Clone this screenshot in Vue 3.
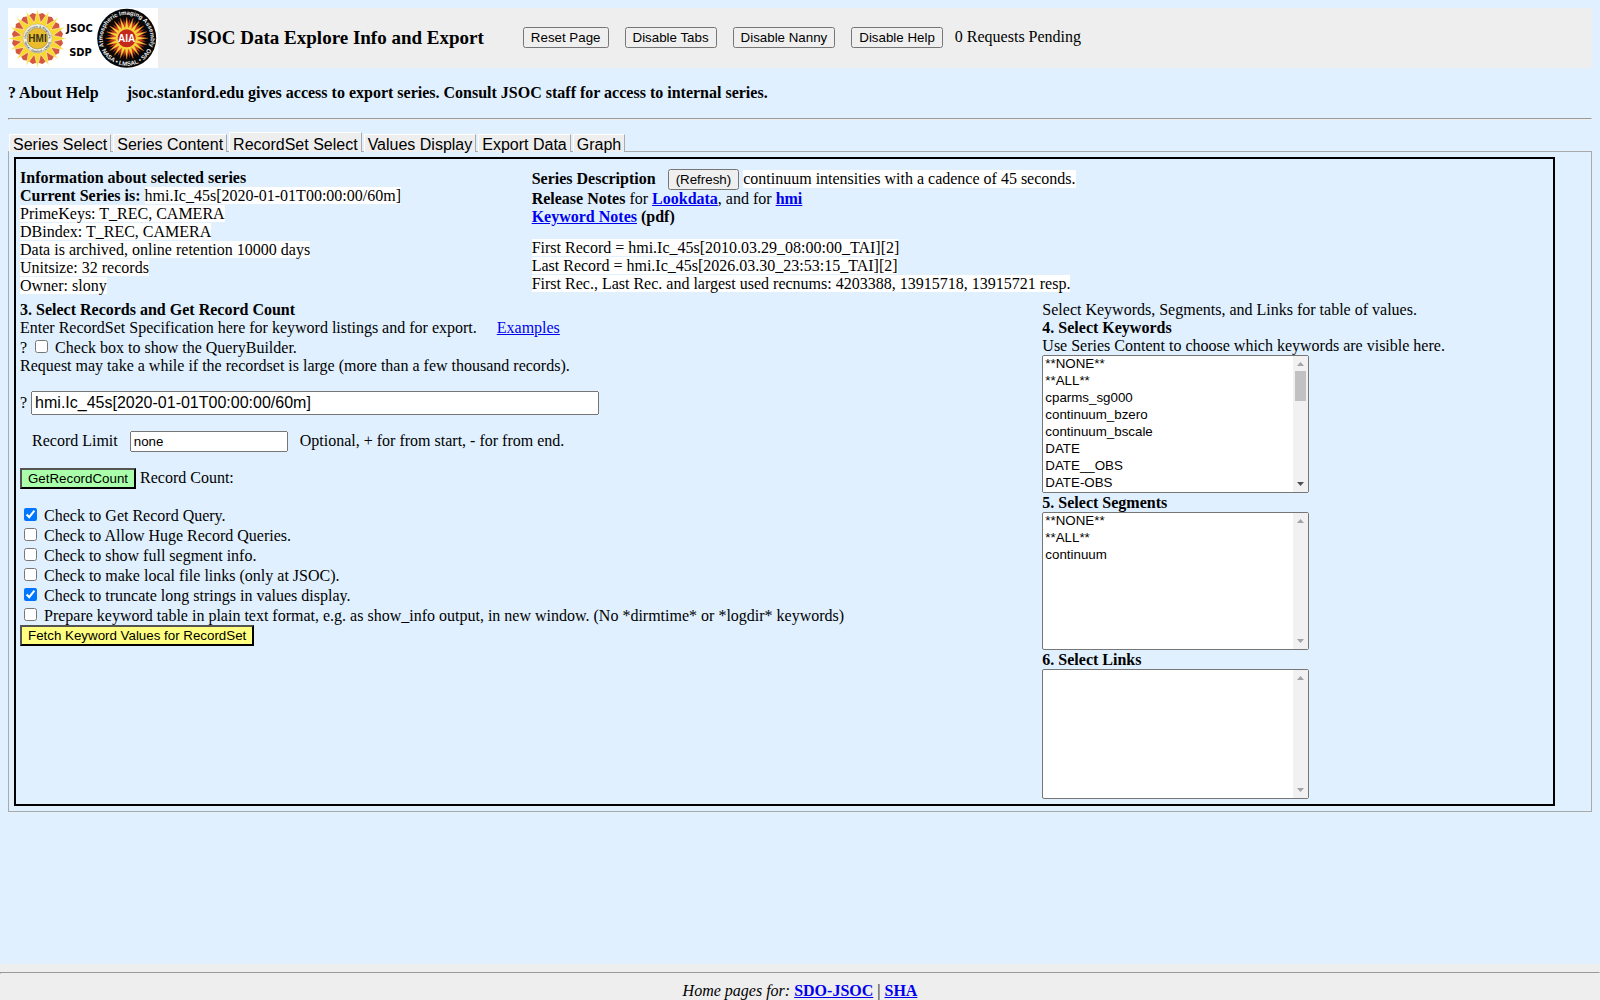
<template>
    <div class="page">
        <header class="header">
            <svg class="logo" viewBox="0 0 150 60" role="img" aria-label="JSOC SDP">
                <defs>
                    <path id="aia-top" d="M96 38.500 A24 24 0 1 1 141.400 38.500" />
                    <path id="aia-bottom" d="M93 40 A27.500 27.500 0 0 0 144.400 40" />
                    <path id="hmi-top" d="M18 31 A11.500 11.500 0 1 1 41 31" />
                    <path id="hmi-bottom" d="M16 31 A13.500 13.500 0 0 0 43 31" />
                </defs>
                <rect width="150" height="60" fill="#fff" />

                <!-- HMI sun -->
                <polygon :points="star(29.5, 30.5, 16, 26, 24, true)" fill="#d4583e" />
                <polygon :points="star(29.5, 30.5, 16, 29, 16)" fill="#f8d82c" stroke="#fff6c8" stroke-width="0.6" />
                <circle cx="29.5" cy="30.5" r="14.5" fill="#f6f3e6" stroke="#b9b39c" stroke-width="0.6" />
                <text class="ring dark"><textPath href="#hmi-top" startOffset="50%">Helioseismic &amp; Magnetic</textPath></text>
                <text class="ring dark"><textPath href="#hmi-bottom" startOffset="50%">NASA • Stanford • LMSAL</textPath></text>
                <circle cx="29.5" cy="30.5" r="10.5" fill="#e8bc2c" stroke="#8d8556" stroke-width="0.6" />
                <text class="badge hmi" x="29.500" y="34">HMI</text>

                <text class="jsoc" x="71.500" y="23.500">JSOC</text>
                <text class="jsoc" x="72.500" y="48">SDP</text>

                <!-- AIA badge -->
                <circle cx="118.7" cy="30.3" r="29.5" fill="#080808" />
                <polygon :points="star(118.7, 30.3, 20, 20, 11, true)" fill="#c8301c" />
                <polygon :points="star(118.7, 30.3, 20, 21, 11)" fill="#f6d23c" stroke="#d8501c" stroke-width="0.5" />
                <circle cx="118.7" cy="30.3" r="9" fill="#c4281c" />
                <text class="badge aia" x="118.700" y="34">AIA</text>
                <text class="ring light"><textPath href="#aia-top" startOffset="50%">Atmospheric Imaging Assembly</textPath></text>
                <text class="ring light"><textPath href="#aia-bottom" startOffset="50%">NASA • LMSAL • SAO</textPath></text>
            </svg>
            <h1>JSOC Data Explore Info and Export</h1>
            <div class="header-buttons">
                <button type="button" @click="resetPage">Reset Page</button>
                <button type="button" @click="tabsOn = !tabsOn">{{ tabsOn ? 'Disable' : 'Enable' }} Tabs</button>
                <button type="button" @click="nannyOn = !nannyOn">{{ nannyOn ? 'Disable' : 'Enable' }} Nanny</button>
                <button type="button" @click="helpOn = !helpOn">{{ helpOn ? 'Disable' : 'Enable' }} Help</button>
                <span class="pending">{{ pending }} Requests Pending</span>
            </div>
        </header>

        <p class="about">
            <span>? About Help</span>
            <span>jsoc.stanford.edu gives access to export series. Consult JSOC staff for access to internal series.</span>
        </p>
        <hr />

        <nav class="tabs">
            <button
                v-for="tab in tabs"
                :key="tab"
                type="button"
                class="tab"
                :class="{ active: tab === activeTab }"
                @click="activeTab = tab"
            >{{ tab }}</button>
        </nav>

        <main class="panel">
            <div class="frame">
                <section class="info">
                    <div>
                        <b>Information about selected series</b><br />
                        <b>Current Series is: </b><span class="value">{{ series }}</span>
                        <div v-for="line in seriesInfo" :key="line"><span class="value">{{ line }}</span></div>
                    </div>
                    <div>
                        <div class="refresh-row">
                            <b>Series Description</b>
                            <button type="button">(Refresh)</button>
                            <span class="value">continuum intensities with a cadence of 45 seconds.</span>
                        </div>
                        <div><b>Release Notes</b> for <a href="#"><b>Lookdata</b></a>, and for <a href="#"><b>hmi</b></a></div>
                        <div><b><a href="#">Keyword Notes</a> (pdf)</b></div>
                        <div class="records">
                            <div v-for="line in recordInfo" :key="line"><span class="value">{{ line }}</span></div>
                        </div>
                    </div>
                </section>

                <section class="select">
                    <div class="query">
                        <b>3. Select Records and Get Record Count</b>
                        <div class="intro">
                            <span>Enter RecordSet Specification here for keyword listings and for export.</span>
                            <a href="#">Examples</a>
                        </div>
                        <div class="option">
                            ? <input id="builder" v-model="showBuilder" type="checkbox" />
                            <label for="builder">Check box to show the QueryBuilder.</label>
                        </div>
                        <div>Request may take a while if the recordset is large (more than a few thousand records).</div>
                        <div class="spec-row">
                            <label for="recordset">?</label>
                            <input id="recordset" v-model="series" type="text" />
                        </div>
                        <div class="limit-row">
                            <label for="limit">Record Limit</label>
                            <input id="limit" v-model="limit" type="text" />
                            <span>Optional, + for from start, - for from end.</span>
                        </div>
                        <div class="count-row">
                            <button type="button" class="count">GetRecordCount</button>
                            <span>Record Count:</span>
                        </div>
                        <div v-for="option in options" :key="option.id" class="option">
                            <input :id="option.id" v-model="option.checked" type="checkbox" />
                            <label :for="option.id">{{ option.label }}</label>
                        </div>
                        <button type="button" class="fetch">Fetch Keyword Values for RecordSet</button>
                    </div>

                    <div class="lists">
                        <div>Select Keywords, Segments, and Links for table of values.</div>
                        <template v-for="list in lists" :key="list.id">
                            <label :for="list.id"><b>{{ list.title }}</b></label>
                            <div v-if="list.hint">{{ list.hint }}</div>
                            <div class="listbox">
                                <select :id="list.id" multiple size="8" @scroll="onScroll(list, $event)">
                                    <option v-for="item in list.items" :key="item">{{ item }}</option>
                                </select>
                                <div class="scrollbar" aria-hidden="true">
                                    <svg class="arrow" :class="{ on: list.scroll > 0 }" viewBox="0 0 15 15"><path d="M4 10h7L7.500 6z" /></svg>
                                    <div class="track">
                                        <div v-if="list.items.length > 8" class="thumb" :style="thumbStyle(list)"></div>
                                    </div>
                                    <svg class="arrow" :class="{ on: list.items.length > 8 && list.scroll < 1 }" viewBox="0 0 15 15"><path d="M4 5h7L7.500 9z" /></svg>
                                </div>
                            </div>
                        </template>
                    </div>
                </section>
            </div>
        </main>

        <footer class="footer">
            <hr />
            <i>Home pages for:</i> <a href="#"><b>SDO-JSOC</b></a> | <a href="#"><b>SHA</b></a>
        </footer>
    </div>
</template>

<script setup>
import { reactive, ref } from 'vue'

const DEFAULT_SERIES = 'hmi.Ic_45s[2020-01-01T00:00:00/60m]'

const tabs = ['Series Select', 'Series Content', 'RecordSet Select', 'Values Display', 'Export Data', 'Graph']
const activeTab = ref('RecordSet Select')

const tabsOn = ref(true)
const nannyOn = ref(true)
const helpOn = ref(true)
const pending = ref(0)

const series = ref(DEFAULT_SERIES)
const limit = ref('none')
const showBuilder = ref(false)

const seriesInfo = [
    'PrimeKeys: T_REC, CAMERA',
    'DBindex: T_REC, CAMERA',
    'Data is archived, online retention 10000 days',
    'Unitsize: 32 records',
    'Owner: slony',
]

const recordInfo = [
    'First Record = hmi.Ic_45s[2010.03.29_08:00:00_TAI][2]',
    'Last Record = hmi.Ic_45s[2026.03.30_23:53:15_TAI][2]',
    'First Rec., Last Rec. and largest used recnums: 4203388, 13915718, 13915721 resp.',
]

const options = reactive([
    { id: 'get-query', label: 'Check to Get Record Query.', checked: true },
    { id: 'allow-huge', label: 'Check to Allow Huge Record Queries.', checked: false },
    { id: 'full-segment', label: 'Check to show full segment info.', checked: false },
    { id: 'local-links', label: 'Check to make local file links (only at JSOC).', checked: false },
    { id: 'truncate', label: 'Check to truncate long strings in values display.', checked: true },
    {
        id: 'plain-text',
        label: 'Prepare keyword table in plain text format, e.g. as show_info output, in new window. (No *dirmtime* or *logdir* keywords)',
        checked: false,
    },
])

const keywords = [
    '**NONE**', '**ALL**', 'cparms_sg000', 'continuum_bzero', 'continuum_bscale', 'DATE', 'DATE__OBS', 'DATE-OBS',
    'TELESCOP', 'INSTRUME', 'WAVELNTH', 'CAMERA', 'BUNIT', 'ORIGIN', 'CONTENT', 'QUALITY', 'QUALLEV1', 'HISTORY',
    'COMMENT', 'BLD_VERS', 'HCAMID', 'SOURCE', 'TOTVALS', 'DATAVALS', 'MISSVALS', 'SATVALS', 'DATAMIN', 'DATAMAX',
]

const lists = reactive([
    {
        id: 'keywords',
        title: '4. Select Keywords',
        hint: 'Use Series Content to choose which keywords are visible here.',
        items: keywords,
        scroll: 0,
    },
    { id: 'segments', title: '5. Select Segments', items: ['**NONE**', '**ALL**', 'continuum'], scroll: 0 },
    { id: 'links', title: '6. Select Links', items: [], scroll: 0 },
])

function onScroll(list, e)
{
    const el = e.target
    const range = el.scrollHeight - el.clientHeight
    list.scroll = range > 0 ? el.scrollTop / range : 0
}

function thumbStyle(list)
{
    const size = 8 / list.items.length * 100
    return { height: `${size}%`, top: `${list.scroll * (100 - size)}%` }
}

function resetPage()
{
    series.value = DEFAULT_SERIES
    limit.value = 'none'
    showBuilder.value = false
}

// Points of a star; shifted turns it by half a ray
function star(cx, cy, rays, outer, inner, shifted = false)
{
    const points = []
    for (let i = 0; i < rays * 2; i++) {
        const r = i % 2 ? inner : outer
        const a = Math.PI * (i + (shifted ? 1 : 0)) / rays - Math.PI / 2
        points.push(`${(cx + r * Math.cos(a)).toFixed(2)},${(cy + r * Math.sin(a)).toFixed(2)}`)
    }
    return points.join(' ')
}
</script>

<style>
body {
    margin: 0;
    background: #e0f0ff;
}
</style>

<style scoped>
.page {
    display: flex;
    flex-direction: column;
    min-height: 100vh;
    font-family: "Liberation Serif", serif;
    font-size: 16px;
    color: #000;
}

button,
input,
select {
    font-family: "Liberation Sans", sans-serif;
}

a {
    color: #0000ee;
}

hr {
    align-self: stretch;
    margin: 0 8px;
}

.header {
    display: flex;
    align-items: center;
    margin: 8px 8px 0;
    background: #eee;
}

.logo {
    width: 150px;
    height: 60px;
    margin-right: 29px;
}

.jsoc {
    font: bold 11px "DejaVu Sans Condensed", "DejaVu Sans", sans-serif;
    text-anchor: middle;
}

.badge {
    font: bold 10px "Liberation Sans", sans-serif;
    text-anchor: middle;
}

.hmi {
    fill: #3a3418;
}

.aia {
    fill: #fff;
}

.ring {
    font-family: "Liberation Sans", sans-serif;
    font-weight: bold;
    text-anchor: middle;
}

.ring.dark {
    font-size: 3px;
    fill: #555;
}

.ring.light {
    font-size: 6px;
    fill: #eee;
}

h1 {
    margin: 0 39px 0 0;
    font-size: 19px;
}

.header-buttons {
    display: flex;
    align-items: baseline;
    gap: 16px;
    padding-bottom: 2px;
}

.pending {
    margin-left: -4px;
}

.about {
    display: flex;
    gap: 28px;
    margin: 16px 8px;
    font-weight: bold;
}

.tabs {
    position: relative;
    display: flex;
    align-items: flex-end;
    gap: 2px;
    margin: 12px 9px -1px;
}

.tab {
    height: 18px;
    padding: 2px 3px 0;
    border: 1px solid #fff;
    border-right-color: #aaa;
    border-bottom: 0;
    border-radius: 0;
    background: #eee;
    font-size: 16px;
    line-height: 15px;
}

.tab.active {
    height: 20px;
    padding-top: 5px;
    line-height: 14px;
}

.panel {
    margin: 0 8px;
    padding: 5px;
    border: 1px solid #aaa;
}

.frame {
    margin-right: 31px;
    padding: 10px 0 5px 4px;
    border: 2px solid #000;
}

.info,
.select {
    display: grid;
    grid-template-columns: 1fr 2fr;
    column-gap: 1px;
}

.select {
    grid-template-columns: 2fr 1fr;
    margin-top: 6px;
}

.value {
    background: #fff;
}

.refresh-row {
    display: flex;
    align-items: baseline;
    gap: 4px;
}

.refresh-row button {
    margin-left: 8px;
}

.records {
    margin-top: 13px;
}

.query {
    display: flex;
    flex-direction: column;
    align-items: flex-start;
}

.intro {
    display: flex;
    gap: 20px;
}

.spec-row,
.limit-row,
.count-row {
    display: flex;
    align-items: baseline;
    gap: 4px;
    margin-top: 16px;
}

#recordset {
    width: 568px;
    max-width: 60vw;
    height: 24px;
    box-sizing: border-box;
    font-size: 16px;
}

.limit-row {
    gap: 12px;
    padding-left: 12px;
}

#limit {
    width: 158px;
    box-sizing: border-box;
}

.count-row {
    margin-bottom: 16px;
}

.count {
    background: #aaffaa;
}

.option label {
    padding-left: 4px;
}

.fetch {
    background: #ffff80;
}

.lists {
    display: flex;
    flex-direction: column;
    align-items: flex-start;
}

.listbox {
    position: relative;
    width: 267px;
    margin-bottom: 1px;
}

.listbox:last-child {
    margin-bottom: 0;
}

.listbox select {
    display: block;
    width: 100%;
    scrollbar-width: none;
}

#links {
    height: 130px;
}

/* always visible scrollbar over the right edge of the list */
.scrollbar {
    position: absolute;
    top: 1px;
    right: 1px;
    bottom: 1px;
    display: flex;
    flex-direction: column;
    width: 15px;
    background: #f1f1f1;
    pointer-events: none;
}

.arrow {
    width: 15px;
    height: 15px;
    fill: #a3a3a3;
}

.arrow.on {
    fill: #505050;
}

.track {
    position: relative;
    flex: 1;
}

.thumb {
    position: absolute;
    left: 2px;
    right: 2px;
    background: #c1c1c1;
}

.footer {
    margin-top: auto;
    background: #eee;
    text-align: center;
}

.footer hr {
    margin: 8px 0;
}
</style>
